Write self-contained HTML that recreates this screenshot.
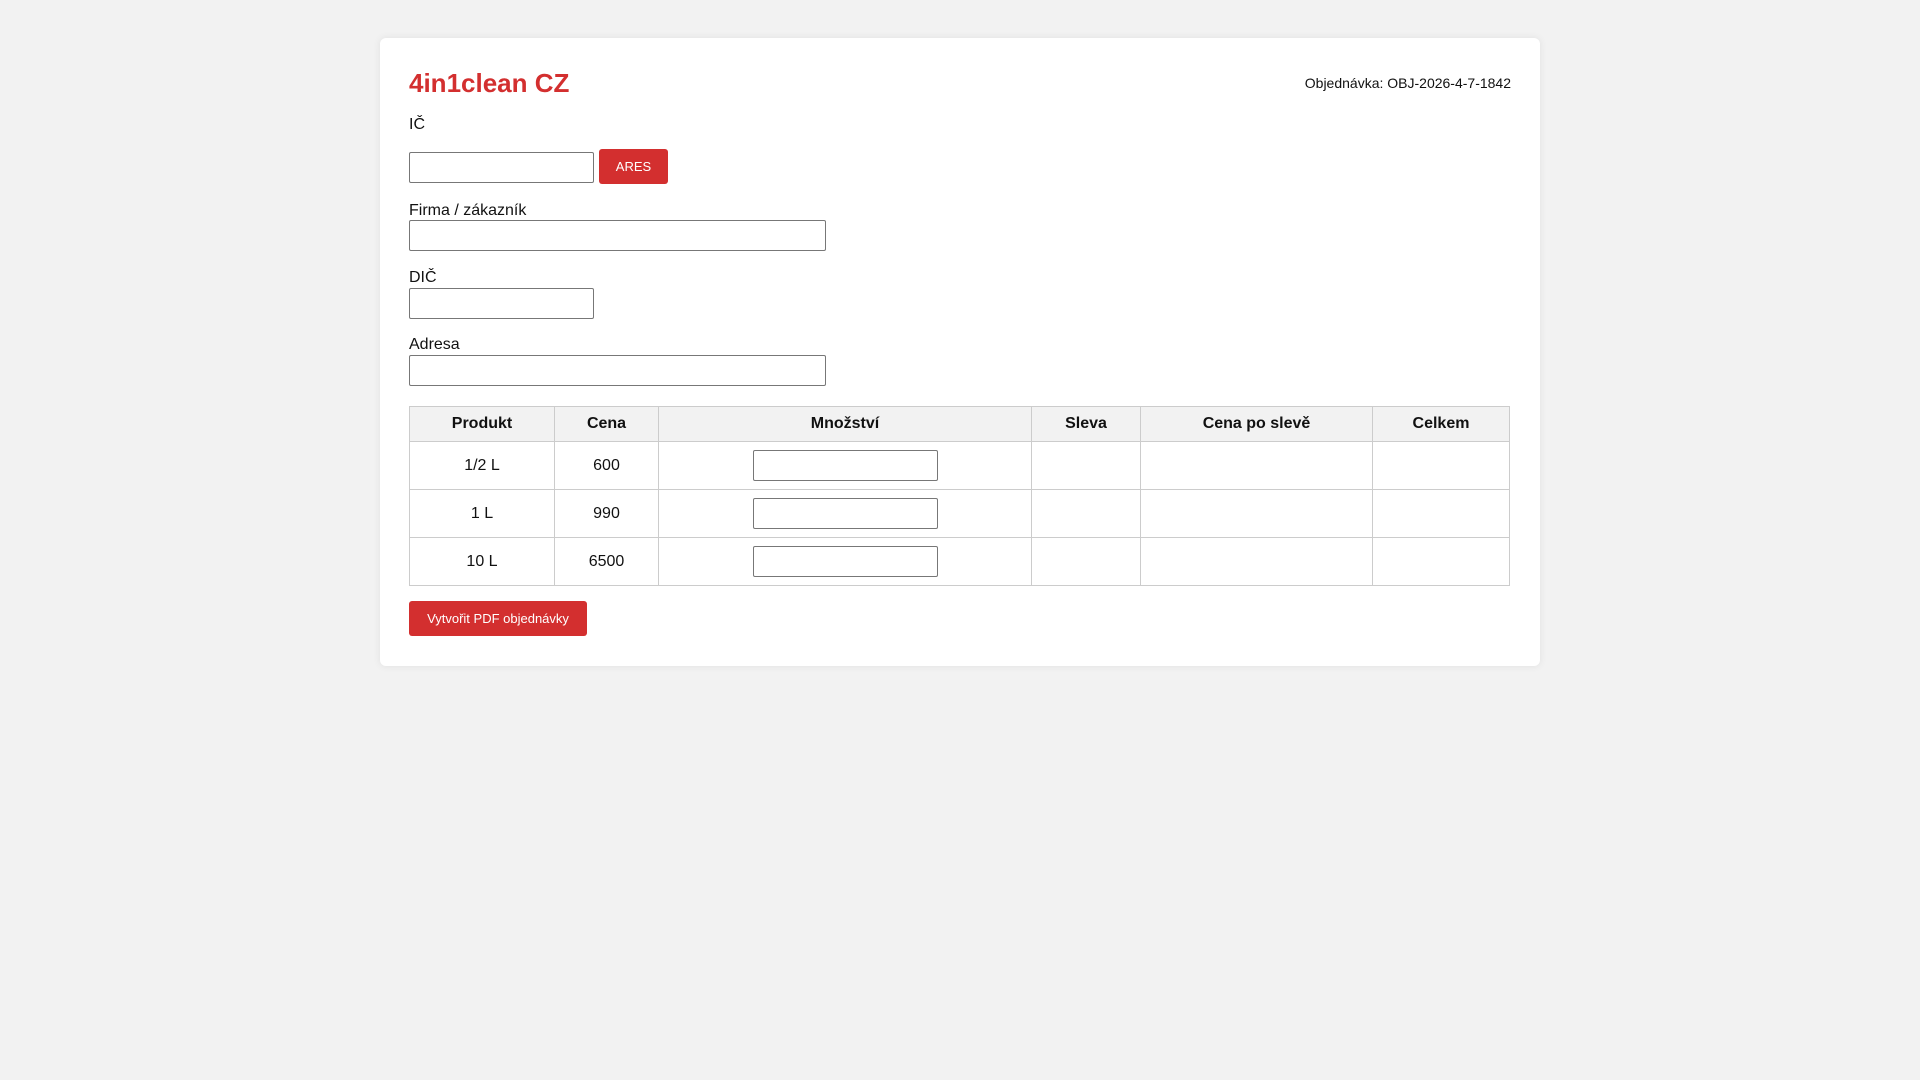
<!DOCTYPE html>
<html><head><meta charset="utf-8"><style>
*{box-sizing:border-box}
body{margin:0;width:1920px;height:1080px;background:#f2f2f2;font-family:"Liberation Sans",Arial,sans-serif;font-size:16px;color:#111;position:relative}
.card{position:absolute;left:380px;top:38px;width:1160px;height:628px;background:#fff;border-radius:6px;box-shadow:0 0 8px rgba(0,0,0,.08)}
.a{position:absolute}
h1{position:absolute;margin:0;left:29px;top:30px;font-size:26px;color:#d32f2f;font-weight:bold}
.inp{position:absolute;height:31px;border:1px solid #777;border-radius:2px;background:#fff}
.btn{position:absolute;background:#d32f2f;color:#fff;border-radius:3px;font-size:13px;display:flex;align-items:center;justify-content:center}
table{position:absolute;left:29px;top:368px;width:1101px;border-collapse:collapse}
td,th{border:1px solid #ccc;text-align:center;padding:0;position:relative}
th{background:#f2f2f2;height:35px;font-weight:bold}
td{height:48px}
td .q{display:inline-block;width:185px;height:31px;border:1px solid #777;border-radius:2px;vertical-align:middle}
</style></head><body>
<div class="card">
<h1>4in1clean CZ</h1>
<div class="a" style="right:29px;top:37px;font-size:14px">Objednávka: OBJ-2026-4-7-1842</div>
<div class="a" style="left:29px;top:78px">IČ</div>
<div class="inp" style="left:29px;top:114px;width:185px"></div>
<div class="btn" style="left:219px;top:111px;width:69px;height:35px">ARES</div>
<div class="a" style="left:29px;top:164px">Firma / zákazník</div>
<div class="inp" style="left:29px;top:182px;width:417px"></div>
<div class="a" style="left:29px;top:231px">DIČ</div>
<div class="inp" style="left:29px;top:250px;width:185px"></div>
<div class="a" style="left:29px;top:298px">Adresa</div>
<div class="inp" style="left:29px;top:317px;width:417px"></div>
<table>
<tr><th style="width:145px">Produkt</th><th style="width:104px">Cena</th><th style="width:373px">Množství</th><th style="width:109px">Sleva</th><th style="width:232px">Cena po slevě</th><th>Celkem</th></tr>
<tr><td>1/2 L</td><td>600</td><td><span class="q"></span></td><td></td><td></td><td></td></tr>
<tr><td>1 L</td><td>990</td><td><span class="q"></span></td><td></td><td></td><td></td></tr>
<tr><td>10 L</td><td>6500</td><td><span class="q"></span></td><td></td><td></td><td></td></tr>
</table>
<div class="btn" style="left:29px;top:563px;width:178px;height:35px">Vytvořit PDF objednávky</div>
</div>
</body></html>
